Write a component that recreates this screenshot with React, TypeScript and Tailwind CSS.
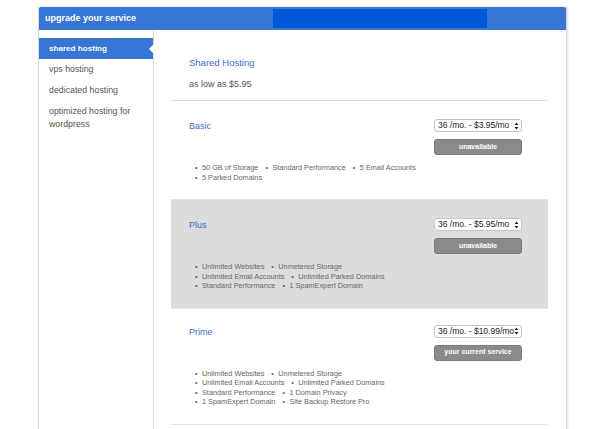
import React from "react";

type Plan = {
  name: string;
  price: string;
  action: string;
  rows: string[][];
  shaded?: boolean;
  pad: string;
};

const plans: Plan[] = [
  {
    name: "Basic",
    price: "36 /mo. - $3.95/mo",
    action: "unavailable",
    rows: [["50 GB of Storage", "Standard Performance", "5 Email Accounts"], ["5 Parked Domains"]],
    pad: "pt-[18px] pb-[17px]",
  },
  {
    name: "Plus",
    price: "36 /mo. - $5.95/mo",
    action: "unavailable",
    rows: [
      ["Unlimited Websites", "Unmetered Storage"],
      ["Unlimited Email Accounts", "Unlimited Parked Domains"],
      ["Standard Performance", "1 SpamExpert Domain"],
    ],
    shaded: true,
    pad: "pt-[18px] pb-[17px]",
  },
  {
    name: "Prime",
    price: "36 /mo. - $10.99/mo",
    action: "your current service",
    rows: [
      ["Unlimited Websites", "Unmetered Storage"],
      ["Unlimited Email Accounts", "Unlimited Parked Domains"],
      ["Standard Performance", "1 Domain Privacy"],
      ["1 SpamExpert Domain", "Site Backup Restore Pro"],
    ],
    pad: "pt-[16px] pb-[17px]",
  },
];

const nav = ["shared hosting", "vps hosting", "dedicated hosting", "optimized hosting for wordpress"];

function Spinner() {
  return (
    <svg width="5" height="8" viewBox="0 0 5 8" className="shrink-0">
      <path d="M2.5 0.5 L4.5 3 L0.5 3 Z" fill="#222" />
      <path d="M2.5 7.5 L4.5 5 L0.5 5 Z" fill="#222" />
    </svg>
  );
}

function PlanRow({ plan }: { plan: Plan }) {
  return (
    <div className={`${plan.shaded ? "bg-[#dcdcdc]" : "bg-white"} border-b border-[#e3e3e3] ${plan.pad}`}>
      <div className="flex justify-between pl-[18px] pr-[26px]">
        <div className="pt-[1px] text-[9px] leading-[13px] text-[#3a6cd0]">{plan.name}</div>
        <div className="flex w-[88px] flex-col gap-[7px]">
          <div className="flex h-[13px] items-center justify-between overflow-hidden whitespace-nowrap rounded-[3px] border border-[#c4c4c4] bg-white pl-[3px] pr-[2px] text-[8.5px] text-[#222]">
            <span className="overflow-hidden">{plan.price}</span>
            <Spinner />
          </div>
          <div className="flex h-[16px] items-center justify-center rounded-[3px] border border-[#7a7a7a] bg-[#8a8a8a] text-[7px] font-bold text-white">
            {plan.action}
          </div>
        </div>
      </div>
      <div className="mt-[8px] pl-[24px] text-[7.3px] leading-[9.5px] text-[#666]">
        {plan.rows.map((row, i) => (
          <div key={i} className="flex">
            {row.map((item) => (
              <span key={item} className="mr-[7px] flex">
                <span className="w-[7px]">•</span>
                {item}
              </span>
            ))}
          </div>
        ))}
      </div>
    </div>
  );
}

export default function App() {
  return (
    <div className="h-[429px] overflow-hidden bg-white pl-[38px] pt-[7px] font-['Liberation_Sans',Arial,sans-serif]">
      <div className="w-[529px] border border-t-0 border-[#d8d8d8] shadow-[1px_0_2px_rgba(0,0,0,0.12)]">
        <div className="flex h-[23px] items-center rounded-t-[2px] bg-[#3676d4] pl-[6px]">
          <span className="w-[228px] text-[9px] font-bold text-white">upgrade your service</span>
          <div className="h-[19px] w-[214px] bg-[#0058d9]" />
        </div>
        <div className="flex">
          <div className="min-h-[440px] w-[115px] shrink-0 border-r border-[#dadada] pt-[8px]">
            {nav.map((item, i) => (
              <div
                key={item}
                className={`relative py-[4px] pl-[10px] pr-[4px] leading-[13px] ${
                  i === 0 ? "bg-[#3676d4] text-[8.1px] font-bold text-white" : "text-[8.8px] text-[#555]"
                }`}
              >
                {item}
                {i === 0 && (
                  <span className="absolute right-[-1px] top-[6px] h-0 w-0 border-y-[5px] border-r-[5px] border-y-transparent border-r-white" />
                )}
              </div>
            ))}
          </div>
          <div className="flex-1 pl-[17px] pr-[18px] pt-[26px]">
            <div className="border-b border-[#dcdcdc] pb-[10px] pl-[18px]">
              <div className="text-[9.5px] leading-[14px] text-[#3a6cd0]">Shared Hosting</div>
              <div className="mt-[8px] text-[9px] leading-[12px] text-[#555]">as low as $5.95</div>
            </div>
            {plans.map((p) => (
              <PlanRow key={p.name} plan={p} />
            ))}
          </div>
        </div>
      </div>
    </div>
  );
}
